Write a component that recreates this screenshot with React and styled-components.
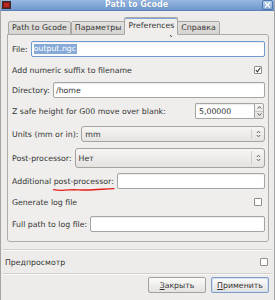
import React from 'react';
import styled, { createGlobalStyle } from 'styled-components';

const Global = createGlobalStyle`
  html, body { margin: 0; padding: 0; background: #edeceb; }
  body { font-family: "DejaVu Sans", "Liberation Sans", sans-serif; font-size: 7.8px; color: #3a3a3a; }
  * { box-sizing: border-box; }
`;

const Window = styled.div`
  width: 275px;
  height: 300px;
  border-left: 1px solid #a4a4a4;
  border-right: 1px solid #a4a4a4;
  background: linear-gradient(#fbfbfa 0px, #edeceb 8px) no-repeat;
  display: flex;
  flex-direction: column;
  overflow: hidden;
  position: relative;
`;

const TitleBar = styled.div`
  height: 11px;
  flex: none;
  display: flex;
  align-items: center;
  padding: 0 1px 0 1px;
  background: linear-gradient(#97b8e2, #6f96cc);
  border-bottom: 1px solid #5b82b8;
`;

const AppIcon = styled.div`
  width: 9px;
  height: 8px;
  border: 1px solid #3b2a2a;
  background: #b82820;
  box-shadow: inset 0 0 0 1px #7a1d18;
`;

const Title = styled.div`
  flex: 1;
  text-align: center;
  color: #ffffff;
  font-weight: bold;
  font-size: 8px;
  line-height: 10px;
  text-shadow: 0 0 1px #4a6fa5;
`;

const CloseBtn = styled.div`
  width: 11px;
  height: 10px;
  border: 1px solid #4e76ad;
  border-radius: 2px;
  background: linear-gradient(#b9d0ee, #86a9d9);
  display: flex;
  align-items: center;
  justify-content: center;
`;

const Body = styled.div`
  flex: 1;
  display: flex;
  flex-direction: column;
`;

const TabBar = styled.div`
  display: flex;
  align-items: flex-end;
  height: 17px;
  margin-top: 7px;
  padding-left: 7px;
  margin-bottom: -1px;
  position: relative;
  z-index: 1;
`;

const Tab = styled.div`
  height: ${p => (p.$active ? 18 : 14)}px;
  padding: 0 3px;
  display: flex;
  align-items: center;
  justify-content: center;
  border: 1px solid #a9a7a3;
  border-bottom: ${p => (p.$active ? '1px solid #efeeec' : '1px solid #a9a7a3')};
  border-radius: 2px 2px 0 0;
  background: ${p => (p.$active ? '#efeeec' : 'linear-gradient(#e4e2de, #d6d4d0)')};
  box-shadow: ${p => (p.$active ? 'inset 0 1px 0 #7ea6d8' : 'none')};
  color: #333;
  white-space: nowrap;
  margin-right: ${p => (p.$active ? '-1px' : '0')};
  margin-left: ${p => (p.$active ? '-1px' : '0')};
  position: relative;
  z-index: ${p => (p.$active ? 2 : 1)};
  line-height: 12px;
`;

const Panel = styled.div`
  margin: 0 5px 0 6px;
  border: 1px solid #aeaca8;
  border-radius: 0 3px 3px 3px;
  background: #efeeec;
  padding: 3px 3px 5px 4px;
  display: flex;
  flex-direction: column;
`;

const Row = styled.div`
  height: ${p => p.$h}px;
  display: flex;
  align-items: center;
  gap: 3px;
`;

const Label = styled.span`
  white-space: nowrap;
  color: #353535;
  position: relative;
`;

const Spacer = styled.div`
  flex: 1;
`;

const Input = styled.div`
  flex: 1;
  height: 16px;
  background: #fff;
  border: 1px solid ${p => (p.$focus ? '#6f9ad2' : '#a6a5a2')};
  border-radius: 2px;
  box-shadow: inset 0 1px 1px rgba(0, 0, 0, 0.08);
  display: flex;
  align-items: center;
  padding: 0 2px;
  color: #303030;
  white-space: nowrap;
`;

const Selected = styled.span`
  background: #86a9d8;
  color: #fff;
  line-height: 10px;
  padding: 0 1px 0 0;
`;

const Combo = styled.div`
  flex: 1;
  height: ${p => p.$h}px;
  border: 1px solid #a4a3a0;
  border-radius: 3px;
  background: linear-gradient(#f6f5f4, #e4e3e0);
  display: flex;
  align-items: stretch;
  color: #303030;
`;

const ComboText = styled.div`
  flex: 1;
  display: flex;
  align-items: center;
  padding-left: 3px;
`;

const ComboArrows = styled.div`
  width: 13px;
  display: flex;
  align-items: center;
  justify-content: center;
  border-left: 1px solid #cfcecb;
  margin: 2px 0;
`;

const SpinWrap = styled.div`
  display: flex;
  height: 16px;
  margin-right: 1px;
`;

const SpinInput = styled.div`
  width: 59px;
  background: #fff;
  border: 1px solid #a6a5a2;
  border-right: none;
  border-radius: 2px 0 0 2px;
  box-shadow: inset 0 1px 1px rgba(0, 0, 0, 0.08);
  display: flex;
  align-items: center;
  padding-left: 3px;
  color: #303030;
`;

const SpinButtons = styled.div`
  width: 10px;
  border: 1px solid #a6a5a2;
  border-radius: 0 2px 2px 0;
  background: linear-gradient(#f6f5f4, #e2e1de);
  display: flex;
  flex-direction: column;
`;

const SpinHalf = styled.div`
  flex: 1;
  display: flex;
  align-items: center;
  justify-content: center;
  border-top: ${p => (p.$bottom ? '1px solid #c8c7c4' : 'none')};
`;

const Check = styled.div`
  width: 8px;
  height: 8px;
  border: 1px solid #8e8d8a;
  border-radius: 1px;
  background: #fff;
  margin-right: ${p => p.$mr}px;
  display: flex;
  align-items: center;
  justify-content: center;
`;

const Separator = styled.div`
  height: 2px;
  margin: ${p => p.$mt}px 2px 0 2px;
  border-top: 1px solid #d3d1cd;
  border-bottom: 1px solid #fafaf9;
`;

const PreviewRow = styled.div`
  height: 22px;
  display: flex;
  align-items: center;
  padding-left: 4px;
`;

const ButtonRow = styled.div`
  display: flex;
  justify-content: flex-end;
  gap: 5px;
  padding: 2px 5px 0 0;
`;

const Button = styled.div`
  width: ${p => p.$w}px;
  height: 16px;
  border: 1px solid ${p => (p.$default ? '#7f9cc4' : '#a3a29f')};
  border-radius: 2px;
  background: linear-gradient(#fbfbfa, #e3e2df);
  box-shadow: ${p => (p.$default ? 'inset 0 0 0 1px #d3e0f1' : 'none')};
  display: flex;
  align-items: center;
  justify-content: center;
  color: #333;
`;

const Squiggle = styled.svg`
  position: absolute;
  left: -1px;
  top: 10px;
  overflow: visible;
`;

const Cursor = styled.svg`
  position: absolute;
  left: 165px;
  top: 25px;
`;

const UpDown = () => (
  <svg width="5" height="8" viewBox="0 0 5 8">
    <path d="M0.8 3 L2.5 1.2 L4.2 3 M0.8 5 L2.5 6.8 L4.2 5" fill="none" stroke="#555" strokeWidth="0.9" />
  </svg>
);

const CheckMark = () => (
  <svg width="6" height="6" viewBox="0 0 6 6">
    <path d="M0.8 3 L2.4 4.8 L5.3 0.8" fill="none" stroke="#333" strokeWidth="1.1" />
  </svg>
);

export default function App() {
  return (
    <>
      <Global />
      <Window>
        <TitleBar>
          <AppIcon />
          <Title>Path to Gcode</Title>
          <CloseBtn>
            <svg width="7" height="6" viewBox="0 0 7 6">
              <path d="M1 0.5 L6 5.5 M6 0.5 L1 5.5" stroke="#fff" strokeWidth="1.3" />
            </svg>
          </CloseBtn>
        </TitleBar>
        <Body>
          <TabBar>
            <Tab>Path to Gcode</Tab>
            <Tab>Параметры</Tab>
            <Tab $active>Preferences</Tab>
            <Tab>Справка</Tab>
          </TabBar>
          <Panel>
            <Row $h={22}>
              <Label>File:</Label>
              <Input $focus>
                <Selected>output.ngc</Selected>
              </Input>
            </Row>
            <Row $h={20}>
              <Label>Add numeric suffix to filename</Label>
              <Spacer />
              <Check $mr={3}>
                <CheckMark />
              </Check>
            </Row>
            <Row $h={20}>
              <Label>Directory:</Label>
              <Input>/home</Input>
            </Row>
            <Row $h={22}>
              <Label>Z safe height for G00 move over blank:</Label>
              <Spacer />
              <SpinWrap>
                <SpinInput>5,00000</SpinInput>
                <SpinButtons>
                  <SpinHalf>
                    <svg width="5" height="3" viewBox="0 0 5 3">
                      <path d="M0.6 2.6 L2.5 0.6 L4.4 2.6" fill="none" stroke="#444" strokeWidth="0.9" />
                    </svg>
                  </SpinHalf>
                  <SpinHalf $bottom>
                    <svg width="5" height="3" viewBox="0 0 5 3">
                      <path d="M0.6 0.4 L2.5 2.4 L4.4 0.4" fill="none" stroke="#444" strokeWidth="0.9" />
                    </svg>
                  </SpinHalf>
                </SpinButtons>
              </SpinWrap>
            </Row>
            <Row $h={24}>
              <Label>Units (mm or in):</Label>
              <Combo $h={16}>
                <ComboText>mm</ComboText>
                <ComboArrows>
                  <UpDown />
                </ComboArrows>
              </Combo>
            </Row>
            <Row $h={24}>
              <Label>Post-processor:</Label>
              <Combo $h={20}>
                <ComboText>Нет</ComboText>
                <ComboArrows>
                  <UpDown />
                </ComboArrows>
              </Combo>
            </Row>
            <Row $h={22}>
              <Label>
                Additional{' '}
                <Label>
                  post-processor
                  <Squiggle width="62" height="5" viewBox="0 0 62 5">
                    <path
                      d="M0.5 2.6 C6 3.8 10 3.6 16 2.9 C22 2.2 28 3.4 34 3 C42 2.4 50 2.2 61 1.6"
                      fill="none"
                      stroke="#e3211b"
                      strokeWidth="1.4"
                      strokeLinecap="round"
                    />
                  </Squiggle>
                </Label>
                :
              </Label>
              <Input />
            </Row>
            <Row $h={20}>
              <Label>Generate log file</Label>
              <Spacer />
              <Check $mr={3} />
            </Row>
            <Row $h={24}>
              <Label>Full path to log file:</Label>
              <Input />
            </Row>
          </Panel>
          <Separator $mt={7} />
          <PreviewRow>
            <Label>Предпросмотр</Label>
            <Spacer />
            <Check $mr={6} />
          </PreviewRow>
          <Separator $mt={0} />
          <ButtonRow>
            <Button $w={58}>
              <span>
                <u>З</u>акрыть
              </span>
            </Button>
            <Button $w={58} $default>
              <span>
                <u>П</u>рименить
              </span>
            </Button>
          </ButtonRow>
        </Body>
        <Cursor width="9" height="14" viewBox="0 0 9 14">
          <path d="M0.5 0.5 L0.5 11 L3 8.6 L4.8 12.8 L6.4 12.1 L4.6 8 L8 8 Z" fill="#111" stroke="#fff" strokeWidth="0.9" />
        </Cursor>
      </Window>
    </>
  );
}
